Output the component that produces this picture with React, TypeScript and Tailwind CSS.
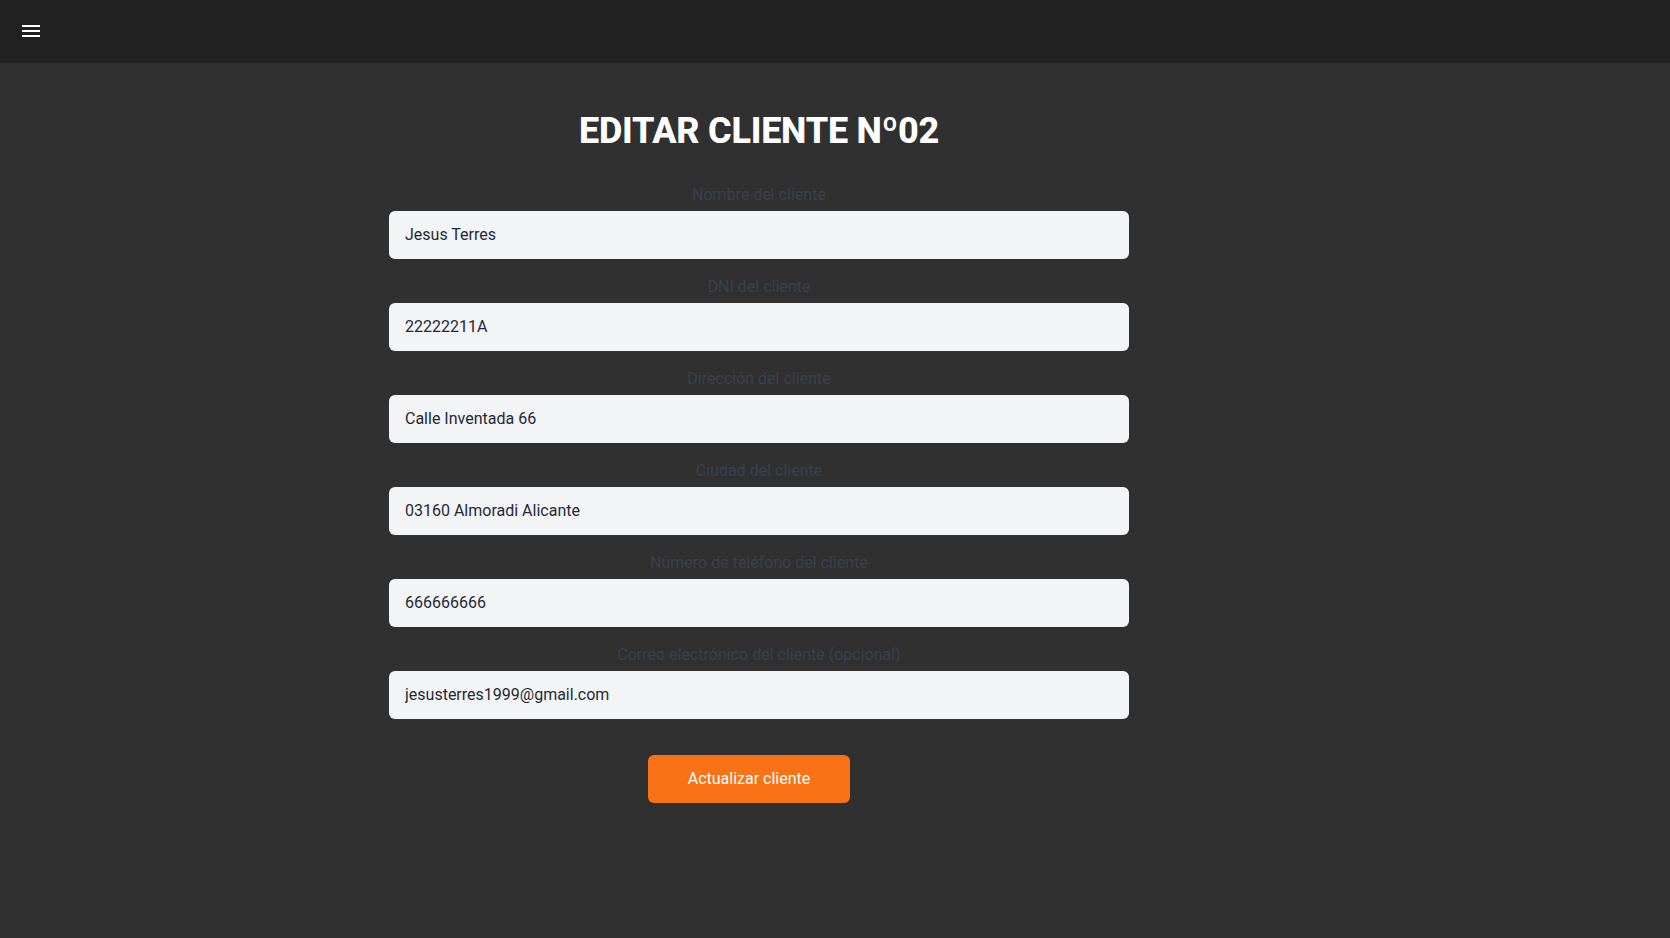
import React from "react";

const fields = [
  { label: "Nombre del cliente", value: "Jesus Terres" },
  { label: "DNI del cliente", value: "22222211A" },
  { label: "Dirección del cliente", value: "Calle Inventada 66" },
  { label: "Ciudad del cliente", value: "03160 Almoradi Alicante" },
  { label: "Número de teléfono del cliente", value: "666666666" },
  { label: "Correo electrónico del cliente (opcional)", value: "jesusterres1999@gmail.com" },
];

export default function App() {
  return (
    <div className="min-h-[938px] w-full bg-[#303030]" style={{ fontFamily: "Roboto, 'Noto Sans', sans-serif" }}>
      <header className="h-[63px] bg-[#212121] flex items-center pl-[19px]">
        <svg width="24" height="24" viewBox="0 0 24 24" fill="#ffffff" className="-mt-[2px]">
          <path d="M3 18h18v-2H3v2zm0-5h18v-2H3v2zm0-7v2h18V6H3z" />
        </svg>
      </header>
      <main className="ml-[389px] w-[740px] pt-[48px]">
        <h1 className="text-center text-[36px] leading-[40px] font-extrabold text-white tracking-[-0.25px]">
          EDITAR CLIENTE Nº02
        </h1>
        <form className="mt-[32px] flex flex-col gap-4">
          {fields.map((f) => (
            <div key={f.label} className="flex flex-col">
              <label className="text-center text-base leading-6 text-[#374151] mb-1">{f.label}</label>
              <input
                readOnly
                value={f.value}
                className="h-12 w-full rounded-md bg-[#f3f4f6] px-4 pb-[2px] text-base font-normal text-[#1f2937] outline-none"
              />
            </div>
          ))}
        </form>
        <button className="mt-9 ml-[259px] h-12 w-[202px] rounded-md bg-[#f97316] text-base font-normal text-white">
          Actualizar cliente
        </button>
      </main>
    </div>
  );
}
